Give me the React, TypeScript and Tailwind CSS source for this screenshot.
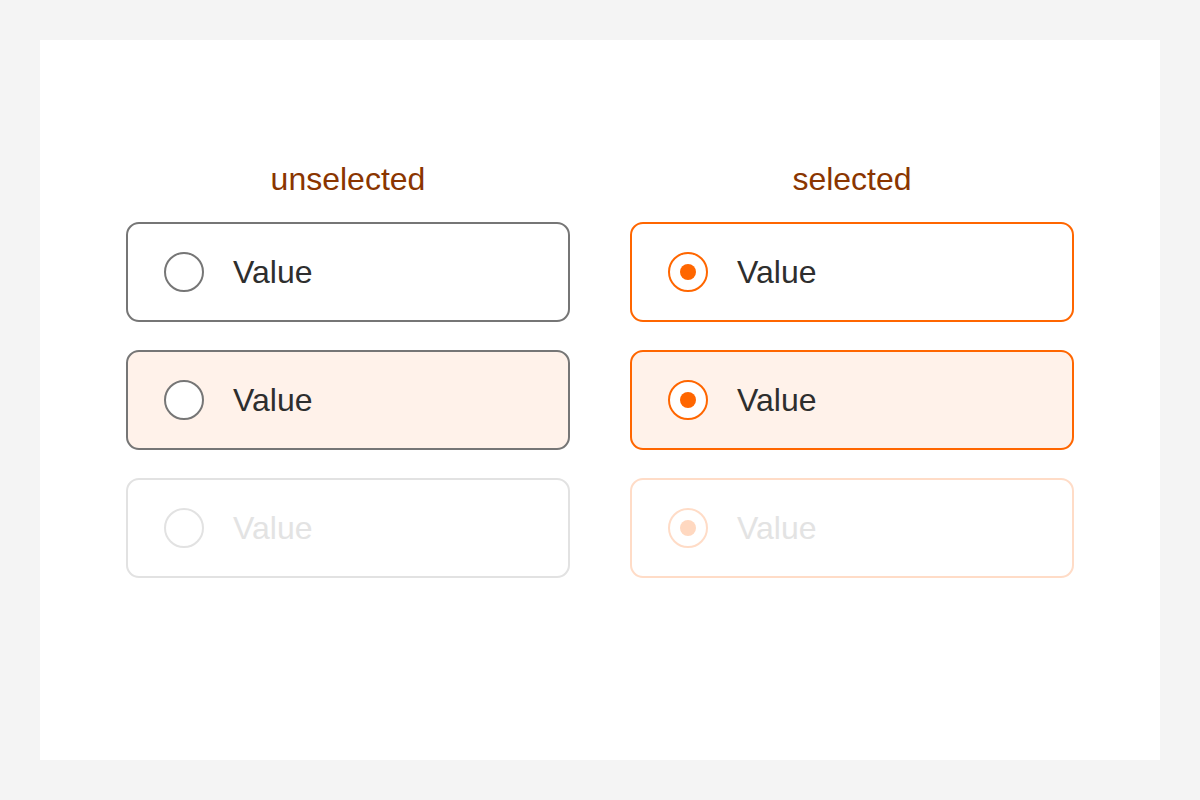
type Variant = "default" | "hover" | "disabled";

interface OptionProps {
  selected: boolean;
  variant: Variant;
}

function RadioOption({ selected, variant }: OptionProps) {
  const disabled = variant === "disabled";

  let card = "border-[#767676] bg-white";
  let ring = "border-[#767676] bg-white";
  if (selected) {
    card = "border-[#ff6600] bg-white";
    ring = "border-[#ff6600] bg-white";
  }
  if (variant === "hover") {
    card = selected ? "border-[#ff6600] bg-[#fff2ea]" : "border-[#767676] bg-[#fff2ea]";
  }
  if (disabled) {
    card = selected ? "border-[#ffdcc7] bg-white" : "border-[#e2e2e2] bg-white";
    ring = selected ? "border-[#ffdcc7] bg-white" : "border-[#e2e2e2] bg-white";
  }

  return (
    <div
      className={`flex h-[100px] w-[444px] items-center rounded-[13px] border-2 pl-[36px] ${card}`}
    >
      <div
        className={`flex h-[40px] w-[40px] shrink-0 items-center justify-center rounded-full border-2 ${ring}`}
      >
        {selected && (
          <div
            className={`h-[16px] w-[16px] rounded-full ${disabled ? "bg-[#ffd8c0]" : "bg-[#ff6600]"}`}
          />
        )}
      </div>
      <span
        className={`ml-[29px] text-[32px] leading-none ${disabled ? "text-[#e3e3e3]" : "text-[#2e2e2e]"}`}
      >
        Value
      </span>
    </div>
  );
}

function Column({ label, selected }: { label: string; selected: boolean }) {
  return (
    <div className="flex flex-col items-center">
      <div className="mb-[27px] text-[32px] leading-none text-[#8a3500]">{label}</div>
      <div className="flex flex-col gap-[28px]">
        <RadioOption selected={selected} variant="default" />
        <RadioOption selected={selected} variant="hover" />
        <RadioOption selected={selected} variant="disabled" />
      </div>
    </div>
  );
}

export default function App() {
  return (
    <div
      className="h-[800px] w-[1200px] bg-[#f4f4f4] p-[40px]"
      style={{ fontFamily: '"Liberation Sans", Arial, sans-serif' }}
    >
      <div className="flex h-[720px] w-[1120px] justify-center gap-[60px] bg-white pt-[123px]">
        <Column label="unselected" selected={false} />
        <Column label="selected" selected={true} />
      </div>
    </div>
  );
}
